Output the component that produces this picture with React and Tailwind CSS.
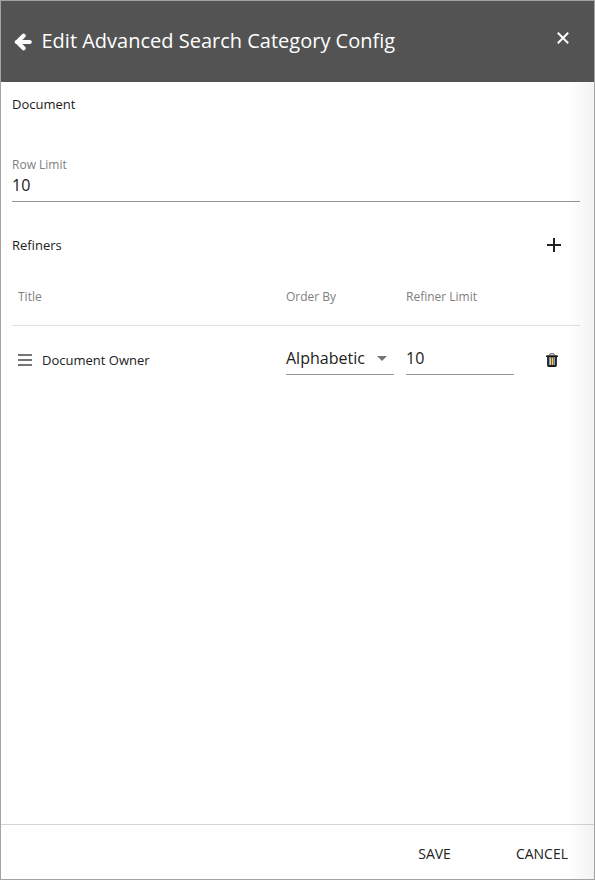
import React from 'react';

function BackArrow() {
  return (
    <svg width="18" height="18" viewBox="0 0 18 18" fill="none" stroke="#fff" strokeWidth="4.2">
      <path d="M3 9H15.700" strokeLinecap="round" />
      <path d="M9.6 2.7L3.300 9l6.300 6.300" strokeLinecap="round" strokeLinejoin="miter" />
    </svg>
  );
}

function CloseIcon() {
  return (
    <svg width="12" height="12" viewBox="0 0 12 12" fill="none" stroke="#fff" strokeWidth="2">
      <path d="M.8 .8l10.400 10.400M11.200 .8L.8 11.200" />
    </svg>
  );
}

function PlusIcon() {
  return (
    <svg width="14" height="14" viewBox="0 0 14 14" fill="#212121" shapeRendering="crispEdges">
      <path d="M6 0h2v14H6zM0 6h14v2H0z" />
    </svg>
  );
}

function TrashIcon() {
  return (
    <svg width="12" height="14" viewBox="0 0 12 14" fill="none">
      <path d="M3.8 2.5V1.4Q3.8 .8 4.500 .8H7.5Q8.2 .8 8.2 1.4V2.5" stroke="#777" strokeWidth="1.2" />
      <path d="M2 3.500h8V12.200q0 .8-.7.8H2.7Q2 13 2 12.200z" fill="#f0c878" stroke="#1c1c1c" strokeWidth="1.8" />
      <path d="M0 2.500h12v1.500H0z" fill="#1c1c1c" />
      <path d="M3 4.300h1v7.800H3zM8 4.300h1v7.800H8z" fill="#6aa9d8" />
      <path d="M5 4.300h.8v7.800H5zM7 4.300h.7v7.800H7z" fill="#5b4a30" />
    </svg>
  );
}

export default function App() {
  return (
    <div className="relative flex h-[880px] w-[595px] flex-col border border-[#a3a3a3] bg-white font-['Open_Sans','Noto_Sans',sans-serif] text-[13px] leading-5 text-[#212121]">
      <header className="flex h-[81px] shrink-0 items-center bg-[#535353] pl-[13px] pr-[25px] text-white">
        <BackArrow />
        <h1 className="mb-0.5 ml-[9.5px] flex-1 text-xl leading-7">Edit Advanced Search Category Config</h1>
        <div className="mb-[7px]">
          <CloseIcon />
        </div>
      </header>

      <main className="flex flex-1 flex-col pl-[11px] pr-3.5">
        <div className="mt-3">Document</div>
        <div className="mt-[41px] flex flex-col border-b border-[#949494]">
          <label className="h-5 text-xs leading-5 text-[#808080]">Row Limit</label>
          <div className="h-[26px] text-base leading-5">10</div>
        </div>
        <div className="mt-[33px] flex h-5 items-center justify-between pr-[19px]">
          <span>Refiners</span>
          <PlusIcon />
        </div>

        <div className="mt-4 grid h-[55px] grid-cols-[268px_120px_1fr] border-b border-[#e0e0e0] pl-1.5 pt-4 text-xs leading-5 text-[#808080]">
          <span>Title</span>
          <span>Order By</span>
          <span>Refiner Limit</span>
        </div>
        <div className="mt-[19px] grid h-[30px] grid-cols-[268px_108px_108px_1fr] pl-1.5">
          <div className="flex h-[30px] items-center">
            <div className="flex w-3.5 flex-col gap-[3px]">
              <i className="h-0.5 bg-[#757575]" />
              <i className="h-0.5 bg-[#757575]" />
              <i className="h-0.5 bg-[#757575]" />
            </div>
            <span className="ml-2.5">Document Owner</span>
          </div>
          <div className="flex h-[30px] items-start justify-between border-b border-[#949494] pr-[7px]">
            <span className="text-base leading-[26px]">Alphabetic</span>
            <svg className="mt-[11px]" width="10" height="5" viewBox="0 0 10 5">
              <path d="M0 0h10L5 5z" fill="#757575" />
            </svg>
          </div>
          <div className="ml-3 h-[30px] w-[108px] border-b border-[#949494] text-base leading-[26px]">10</div>
          <div className="ml-11 mt-2">
            <TrashIcon />
          </div>
        </div>
      </main>

      <footer className="flex h-[55px] shrink-0 items-center justify-end gap-[65px] border-t border-[#d4d4d4] pr-[26px] pt-1 text-sm">
        <span>SAVE</span>
        <span>CANCEL</span>
      </footer>
      <div className="pointer-events-none absolute bottom-0 right-0 top-[81px] w-[26px] bg-gradient-to-r from-transparent to-black/5" />
    </div>
  );
}
